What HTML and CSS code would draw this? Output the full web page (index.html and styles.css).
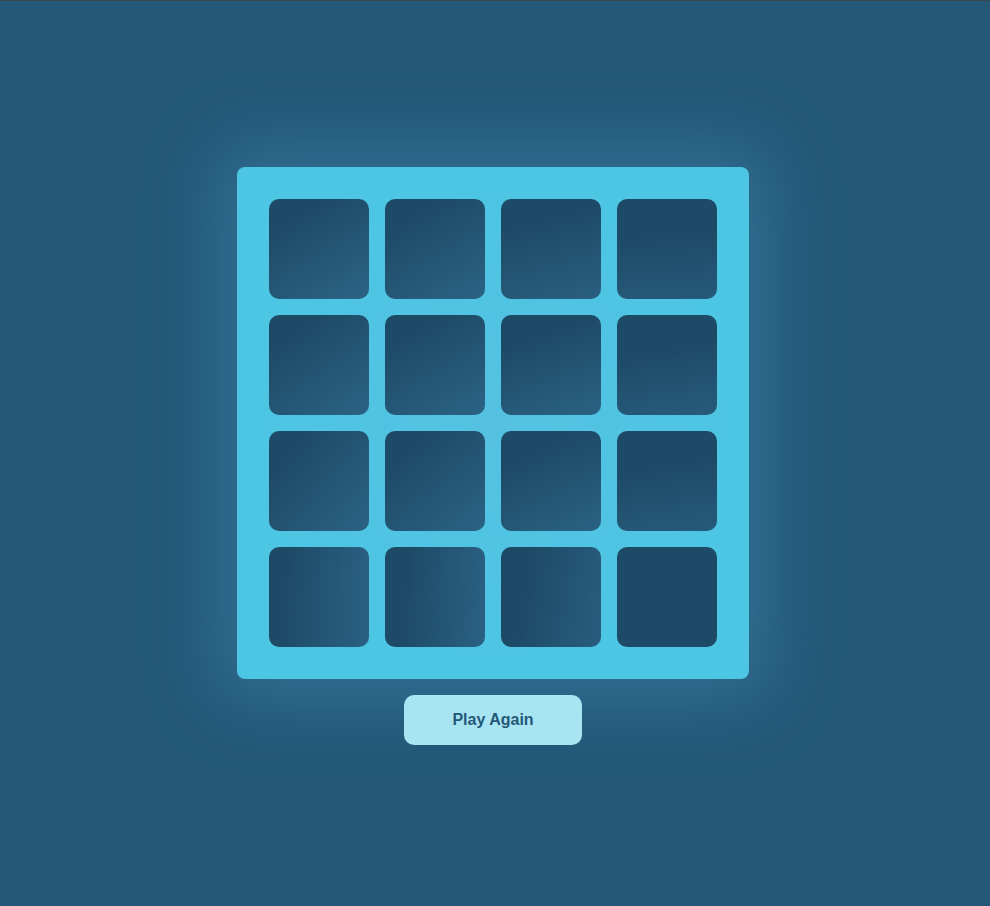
FILE: index.html
```html
<!DOCTYPE html>
<html lang="en">
<head>
<meta charset="utf-8">
<title>Memory Game</title>
<link rel="stylesheet" href="styles.css">
</head>
<body>
<main class="game">
  <div class="board">
    <div class="tile t1"></div>
    <div class="tile t2"></div>
    <div class="tile t3"></div>
    <div class="tile t4"></div>
    <div class="tile t5"></div>
    <div class="tile t6"></div>
    <div class="tile t7"></div>
    <div class="tile t8"></div>
    <div class="tile t9"></div>
    <div class="tile t10"></div>
    <div class="tile t11"></div>
    <div class="tile t12"></div>
    <div class="tile t13"></div>
    <div class="tile t14"></div>
    <div class="tile t15"></div>
    <div class="tile t16"></div>
  </div>
  <button class="play-again">Play Again</button>
</main>
</body>
</html>
```

FILE: styles.css
```css
html, body {
  margin: 0;
  padding: 0;
}
body {
  min-height: 905px;
  background: #235878;
  border-top: 1px solid #3b4750;
  font-family: "Liberation Sans", Arial, sans-serif;
}
.game {
  display: flex;
  flex-direction: column;
  align-items: center;
  padding-top: 166px;
  padding-right: 4px;
  gap: 16px;
}
.board {
  width: 448px;
  padding: 32px;
  display: grid;
  grid-template-columns: repeat(4, 100px);
  grid-auto-rows: 100px;
  gap: 16px;
  background: radial-gradient(circle at 50% 50%, #55c1e1 0%, #4cc6e3 70%);
  border-radius: 8px;
  box-shadow: 0 0 70px 20px rgba(62, 132, 172, 0.55);
}
.tile {
  border-radius: 10px;
  background: #1d4a66;
}
.t1 { background: linear-gradient(150deg, #1d4a66 20%, #2c6486 100%); }
.t2 { background: linear-gradient(150deg, #1d4a66 20%, #2b6385 100%); }
.t3 { background: linear-gradient(165deg, #1d4a66 25%, #295f80 100%); }
.t4 { background: linear-gradient(175deg, #1d4a66 35%, #26597a 100%); }
.t5 { background: linear-gradient(145deg, #1d4a66 20%, #2b6385 100%); }
.t6 { background: linear-gradient(150deg, #1d4a66 20%, #2b6385 100%); }
.t7 { background: linear-gradient(160deg, #1d4a66 25%, #2a6283 100%); }
.t8 { background: linear-gradient(170deg, #1d4a66 35%, #275b7c 100%); }
.t9 { background: linear-gradient(130deg, #1d4a66 20%, #2b6385 100%); }
.t10 { background: linear-gradient(140deg, #1d4a66 20%, #2b6385 100%); }
.t11 { background: linear-gradient(155deg, #1d4a66 25%, #2a6283 100%); }
.t12 { background: linear-gradient(170deg, #1d4a66 35%, #265a7b 100%); }
.t13 { background: linear-gradient(95deg, #1d4a66 15%, #2a6184 100%); }
.t14 { background: linear-gradient(95deg, #1d4a66 20%, #2a6184 100%); }
.t15 { background: linear-gradient(100deg, #1d4a66 25%, #285d7f 100%); }
.t16 { background: #1d4a66; }
.play-again {
  width: 178px;
  height: 50px;
  border: none;
  border-radius: 10px;
  background: #a9e4f3;
  color: #235878;
  font-family: "Liberation Sans", Arial, sans-serif;
  font-weight: bold;
  font-size: 16px;
  cursor: pointer;
}
```
